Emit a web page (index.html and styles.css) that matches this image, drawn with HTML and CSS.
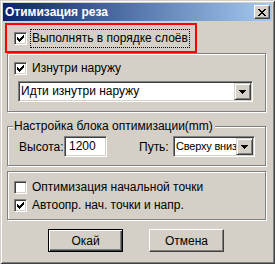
FILE: index.html
```html
<!DOCTYPE html>
<html>
<head>
<meta charset="utf-8">
<link rel="stylesheet" href="styles.css">
</head>
<body>
<div class="window">
  <div class="titlebar">
    <span class="title">Отимизация реза</span>
    <span class="close"><svg width="8" height="7" viewBox="0 0 8 7" shape-rendering="crispEdges"><path d="M0 0h2v1h-2z M6 0h2v1h-2z M1 1h2v1h-2z M5 1h2v1h-2z M2 2h4v1h-4z M3 3h2v1h-2z M2 4h4v1h-4z M1 5h2v1h-2z M5 5h2v1h-2z M0 6h2v1h-2z M6 6h2v1h-2z" fill="#000"/></svg></span>
  </div>
  <div class="content">
    <div class="highlight">
      <div class="check">
        <span class="box"><svg width="9" height="9" viewBox="0 0 9 9" shape-rendering="crispEdges"><path d="M1 2h1v3h-1z M2 3h1v3h-1z M3 4h1v3h-1z M4 3h1v3h-1z M5 2h1v3h-1z M6 1h1v3h-1z M7 0h1v3h-1z" fill="#000"/></svg></span>
        <span class="text focus">Выполнять в порядке слоёв</span>
      </div>
    </div>
    <div class="group g1">
      <div class="check">
        <span class="box"><svg width="9" height="9" viewBox="0 0 9 9" shape-rendering="crispEdges"><path d="M1 2h1v3h-1z M2 3h1v3h-1z M3 4h1v3h-1z M4 3h1v3h-1z M5 2h1v3h-1z M6 1h1v3h-1z M7 0h1v3h-1z" fill="#000"/></svg></span>
        <span class="text">Изнутри наружу</span>
      </div>
      <div class="combo wide">
        <span class="value">Идти изнутри наружу</span>
        <span class="drop"><svg width="7" height="4" viewBox="0 0 7 4" shape-rendering="crispEdges"><path d="M0 0h7v1h-7z M1 1h5v1h-5z M2 2h3v1h-3z M3 3h1v1h-1z" fill="#000"/></svg></span>
      </div>
    </div>
    <div class="group g2">
      <span class="legend">Настройка блока оптимизации(mm)</span>
      <div class="row">
        <span class="lbl lbl-h">Высота:</span>
        <span class="input">1200</span>
        <span class="lbl lbl-p">Путь:</span>
        <div class="combo small">
          <span class="value">Сверху вниз</span>
          <span class="drop"><svg width="7" height="4" viewBox="0 0 7 4" shape-rendering="crispEdges"><path d="M0 0h7v1h-7z M1 1h5v1h-5z M2 2h3v1h-3z M3 3h1v1h-1z" fill="#000"/></svg></span>
        </div>
      </div>
    </div>
    <div class="group g3">
      <div class="check">
        <span class="box"></span>
        <span class="text">Оптимизация начальной точки</span>
      </div>
      <div class="check second">
        <span class="box"><svg width="9" height="9" viewBox="0 0 9 9" shape-rendering="crispEdges"><path d="M1 2h1v3h-1z M2 3h1v3h-1z M3 4h1v3h-1z M4 3h1v3h-1z M5 2h1v3h-1z M6 1h1v3h-1z M7 0h1v3h-1z" fill="#000"/></svg></span>
        <span class="text">Автоопр. нач. точки и напр.</span>
      </div>
    </div>
    <div class="buttons">
      <span class="btn default">Окай</span>
      <span class="btn">Отмена</span>
    </div>
  </div>
</div>
</body>
</html>
```

FILE: styles.css
```css
* { box-sizing: border-box; }
html, body { margin: 0; padding: 0; }
body {
  font-family: "Liberation Sans", Arial, sans-serif;
  font-size: 12px;
  color: #000;
  background: #d4d0c8;
}
.window {
  width: 275px;
  height: 264px;
  padding: 3px;
  background: #d4d0c8;
  box-shadow: inset 1px 1px 0 #d4d0c8, inset -1px -1px 0 #404040,
              inset 2px 2px 0 #ffffff, inset -2px -2px 0 #808080;
  display: flex;
  flex-direction: column;
}
.titlebar {
  height: 18px;
  background: linear-gradient(to right, #0a246a, #a6caf0);
  display: flex;
  align-items: center;
  justify-content: space-between;
  padding: 0 2px 0 2px;
}
.title {
  color: #fff;
  font-weight: bold;
  font-size: 12px;
  line-height: 18px;
}
.close {
  width: 16px;
  height: 14px;
  background: #d4d0c8;
  border: 1px solid;
  border-color: #ffffff #404040 #404040 #ffffff;
  box-shadow: inset -1px -1px 0 #808080;
  display: flex;
  align-items: center;
  justify-content: center;
}
.close svg { display: block; margin-left: -1px; }
.content {
  padding: 2px 6px 0 4px;
  display: flex;
  flex-direction: column;
}
.highlight {
  margin-left: -2px;
  width: 192px;
  height: 30px;
  border: 2px solid #ff0000;
  display: flex;
  align-items: center;
  padding-left: 7px;
}
.check {
  display: flex;
  align-items: center;
  height: 15px;
  line-height: 15px;
  gap: 5px;
}
.box {
  width: 13px;
  height: 13px;
  background: #fff;
  border: 1px solid;
  border-color: #808080 #ffffff #ffffff #808080;
  box-shadow: inset 1px 1px 0 #404040, inset -1px -1px 0 #d4d0c8;
  display: flex;
  align-items: flex-start;
  justify-content: flex-start;
  padding: 2px 0 0 1px;
  flex: none;
}
.box svg { display: block; }
.text { white-space: nowrap; }
.focus { outline: 1px dotted #000; outline-offset: 1px; }
.group {
  border: 1px solid #808080;
  box-shadow: inset 1px 1px 0 #ffffff, 1px 1px 0 #ffffff;
  display: flex;
  flex-direction: column;
}
.g1 {
  padding: 7px 6px 9px 6px;
}
.combo {
  height: 21px;
  background: #fff;
  border: 1px solid;
  border-color: #808080 #ffffff #ffffff #808080;
  box-shadow: inset 1px 1px 0 #404040, inset -1px -1px 0 #d4d0c8;
  display: flex;
  align-items: center;
  padding: 1px 1px 1px 2px;
  overflow: hidden;
}
.combo .value {
  flex: 1;
  min-width: 0;
  overflow: hidden;
  white-space: nowrap;
  line-height: 17px;
}
.drop {
  flex: none;
  width: 17px;
  height: 17px;
  background: #d4d0c8;
  border: 1px solid;
  border-color: #d4d0c8 #404040 #404040 #d4d0c8;
  box-shadow: inset 1px 1px 0 #ffffff, inset -1px -1px 0 #808080;
  display: flex;
  align-items: center;
  justify-content: center;
}
.drop svg { display: block; }
.wide {
  margin: 5px 0 0 4px;
  width: 235px;
}
.g2 {
  margin-top: 14px;
  padding: 0 6px 8px 11px;
  height: 40px;
}
.legend {
  align-self: flex-start;
  margin: -8px 0 0 -6px;
  padding: 0 2px 0 1px;
  background: #d4d0c8;
  line-height: 15px;
  white-space: nowrap;
}
.row {
  margin-top: 2px;
  display: flex;
  align-items: center;
  height: 21px;
}
.lbl { white-space: nowrap; }
.lbl-h { width: 45px; }
.lbl-p { width: 34px; margin-left: 32px; }
.input {
  width: 43px;
  height: 21px;
  background: #fff;
  border: 1px solid;
  border-color: #808080 #ffffff #ffffff #808080;
  box-shadow: inset 1px 1px 0 #404040, inset -1px -1px 0 #d4d0c8;
  padding-left: 4px;
  line-height: 19px;
}
.small { width: 82px; }
.small .value { font-size: 11px; letter-spacing: -0.2px; }
.g3 {
  margin-top: 5px;
  padding: 8px 6px 6px 6px;
  height: 49px;
}
.second { margin-top: 3px; }
.buttons {
  margin-top: 9px;
  display: flex;
  gap: 26px;
  padding-left: 41px;
}
.btn {
  width: 75px;
  height: 23px;
  background: #d4d0c8;
  border: 1px solid;
  border-color: #ffffff #404040 #404040 #ffffff;
  box-shadow: inset -1px -1px 0 #808080;
  display: flex;
  align-items: center;
  justify-content: center;
}
.btn.default {
  border-color: #000;
  box-shadow: inset 1px 1px 0 #ffffff, inset -1px -1px 0 #404040, inset -2px -2px 0 #808080;
}
```
